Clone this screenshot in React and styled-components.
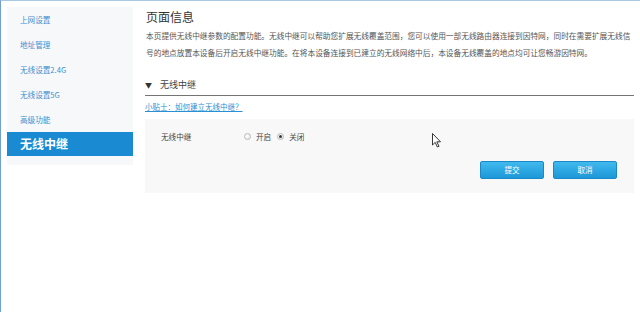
import React from "react";
import styled, { createGlobalStyle } from "styled-components";

const Global = createGlobalStyle`
  html, body { margin: 0; padding: 0; background: #fff; }
  body { font-family: "Noto Sans CJK SC", "Noto Sans", sans-serif; }
  * { box-sizing: border-box; }
`;

const Frame = styled.div`
  position: relative;
  width: 640px;
  height: 312px;
  border-top: 1px solid #a9c8e4;
  border-left: 1px solid #6f9fd3;
  display: flex;
  align-items: flex-start;
  overflow: hidden;
`;

const Sidebar = styled.nav`
  margin: 6px 0 0 6px;
  width: 126px;
  background: #f7f8fa;
  padding-bottom: 9px;
  display: flex;
  flex-direction: column;
`;

const NavItem = styled.div`
  height: ${(p) => (p.$active ? 24 : 25)}px;
  line-height: ${(p) => (p.$active ? 24 : 25)}px;
  padding-left: 13px;
  font-size: ${(p) => (p.$active ? "12px" : "7.6px")};
  font-weight: ${(p) => (p.$active ? 700 : 400)};
  color: ${(p) => (p.$active ? "#fff" : "#3f8fcf")};
  background: ${(p) => (p.$active ? "#1a8bd2" : "transparent")};
  white-space: nowrap;
`;

const Main = styled.main`
  margin-left: 12px;
  width: 489px;
  padding-top: 6px;
  display: flex;
  flex-direction: column;
`;

const Title = styled.h1`
  margin: 0;
  padding-left: 1px;
  font-size: 12px;
  line-height: 20px;
  font-weight: 400;
  color: #333;
`;

const Para = styled.p`
  margin: 0;
  padding-left: 1px;
  font-size: 7.7px;
  line-height: 17px;
  color: #555;
`;

const SectionHeader = styled.div`
  margin-top: 14px;
  height: 21px;
  line-height: 20px;
  border-bottom: 1px solid #747474;
  display: flex;
  align-items: center;
  gap: 6px;
  font-size: 9px;
  color: #444;
`;

const Caret = styled.span`
  font-size: 7px;
  color: #333;
  width: 9px;
`;

const TipLink = styled.a`
  display: block;
  align-self: flex-start;
  margin-top: 4px;
  font-size: 7.5px;
  line-height: 14px;
  height: 14px;
  color: #2a8fd4;
  text-decoration: underline;
  cursor: pointer;
`;

const Panel = styled.section`
  margin-top: 5px;
  height: 74px;
  background: #f8f8f8;
  padding: 10px 17px 0 16px;
  display: flex;
  flex-direction: column;
`;

const FormRow = styled.div`
  display: flex;
  align-items: center;
  height: 14px;
  font-size: 7.6px;
  color: #444;
`;

const Label = styled.span`
  width: 83px;
`;

const RadioGroup = styled.label`
  display: flex;
  align-items: center;
  gap: 5px;
  margin-right: 6px;
`;

const RadioDot = styled.span`
  width: 7px;
  height: 7px;
  border-radius: 50%;
  border: 1px solid #b9b9b9;
  background: radial-gradient(circle at 40% 40%, #fff, #e4e4e4);
  display: flex;
  align-items: center;
  justify-content: center;
  &::after {
    content: "";
    width: 3px;
    height: 3px;
    border-radius: 50%;
    background: ${(p) => (p.$checked ? "#3a3a3a" : "transparent")};
  }
`;

const Actions = styled.div`
  margin-top: 18px;
  display: flex;
  justify-content: flex-end;
  gap: 9px;
`;

const Button = styled.button`
  width: 64px;
  height: 18px;
  padding: 0;
  border: 1px solid #1b88c8;
  border-radius: 2px;
  background: linear-gradient(#40b9ee, #1d98d8);
  color: #fff;
  font-family: inherit;
  font-size: 7.6px;
  line-height: 16px;
`;

const Cursor = styled.svg`
  position: absolute;
  left: 431px;
  top: 132px;
  width: 10px;
  height: 15px;
`;

const navItems = ["上网设置", "地址管理", "无线设置2.4G", "无线设置5G", "高级功能"];

export default function App() {
  return (
    <>
      <Global />
      <Frame>
        <Sidebar>
          {navItems.map((t) => (
            <NavItem key={t}>{t}</NavItem>
          ))}
          <NavItem $active>无线中继</NavItem>
        </Sidebar>
        <Main>
          <Title>页面信息</Title>
          <Para>
            本页提供无线中继参数的配置功能。无线中继可以帮助您扩展无线覆盖范围，您可以使用一部无线路由器连接到因特网，同时在需要扩展无线信号的地点放置本设备后开启无线中继功能。在将本设备连接到已建立的无线网络中后，本设备无线覆盖的地点均可让您畅游因特网。
          </Para>
          <SectionHeader>
            <Caret>▼</Caret>
            无线中继
          </SectionHeader>
          <TipLink>小贴士：如何建立无线中继？</TipLink>
          <Panel>
            <FormRow>
              <Label>无线中继</Label>
              <RadioGroup>
                <RadioDot />
                开启
              </RadioGroup>
              <RadioGroup>
                <RadioDot $checked />
                关闭
              </RadioGroup>
            </FormRow>
            <Actions>
              <Button>提交</Button>
              <Button>取消</Button>
            </Actions>
          </Panel>
        </Main>
        <Cursor viewBox="0 0 10 15">
          <path
            d="M0.5 0.5 L0.5 12 L3.2 9.4 L5.4 14 L7 13.3 L4.8 8.8 L8.5 8.8 Z"
            fill="#fff"
            stroke="#222"
            strokeWidth="0.9"
            strokeLinejoin="round"
          />
        </Cursor>
      </Frame>
    </>
  );
}
